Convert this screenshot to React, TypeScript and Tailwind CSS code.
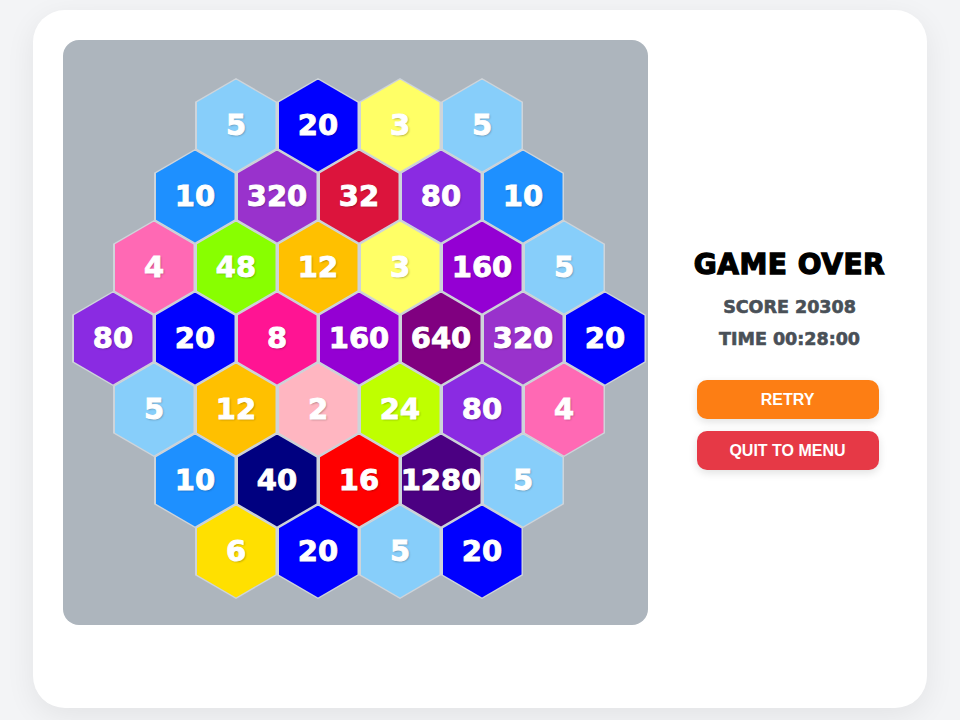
const HEX_CLIP = "[clip-path:polygon(50%_0,100%_25%,100%_75%,50%_100%,0_75%,0_25%)]";

const TILE_COLORS: Record<number, string> = {
  2: "bg-[#ffb6c1]",
  3: "bg-[#ffff66]",
  4: "bg-[#ff69b4]",
  5: "bg-[#87cefa]",
  6: "bg-[#ffe000]",
  8: "bg-[#ff1493]",
  10: "bg-[#1e90ff]",
  12: "bg-[#ffc000]",
  16: "bg-[#ff0000]",
  20: "bg-[#0000ff]",
  24: "bg-[#bfff00]",
  32: "bg-[#dc143c]",
  40: "bg-[#000080]",
  48: "bg-[#88ff00]",
  80: "bg-[#8a2be2]",
  160: "bg-[#9400d3]",
  320: "bg-[#9932cc]",
  640: "bg-[#800080]",
  1280: "bg-[#4b0082]",
};

const board: number[][] = [
  [5, 20, 3, 5],
  [10, 320, 32, 80, 10],
  [4, 48, 12, 3, 160, 5],
  [80, 20, 8, 160, 640, 320, 20],
  [5, 12, 2, 24, 80, 4],
  [10, 40, 16, 1280, 5],
  [6, 20, 5, 20],
];

function Tile({ value }: { value: number }) {
  return (
    <div className={`flex h-[95px] w-[82px] shrink-0 items-center justify-center bg-[#ced4da] ${HEX_CLIP}`}>
      <div
        className={`flex h-[92px] w-[79px] items-center justify-center ${HEX_CLIP} ${TILE_COLORS[value]}`}
      >
        <span className="font-['DejaVu_Sans',sans-serif] text-[29px] font-bold leading-none text-white [-webkit-text-stroke:0.9px_white] [text-shadow:1px_1px_2px_rgba(0,0,0,0.3)]">
          {value}
        </span>
      </div>
    </div>
  );
}

export default function App() {
  return (
    <main className="flex min-h-screen justify-center bg-[#f3f4f6] pt-[10px]">
      <div className="flex h-[698px] w-[894px] rounded-[32px] bg-white py-[30px] pl-[30px] shadow-[0_8px_30px_rgba(0,0,0,0.07)]">
        <section className="flex h-[585px] w-[585px] shrink-0 flex-col items-center rounded-[16px] bg-[#adb5bd] pl-[7px] pt-[38px]">
          {board.map((row, r) => (
            <div key={r} className={`flex ${r > 0 ? "-mt-[24px]" : ""}`}>
              {row.map((v, i) => (
                <Tile key={i} value={v} />
              ))}
            </div>
          ))}
        </section>

        <section className="flex flex-1 flex-col items-center justify-center pl-[4px]">
          <h1 className="font-['DejaVu_Sans',sans-serif] text-[28px] font-bold leading-[34px] tracking-[0.5px] text-black [-webkit-text-stroke:1.3px_black]">
            GAME OVER
          </h1>
          <p className="mt-[13px] font-['DejaVu_Sans',sans-serif] text-[17.5px] font-bold leading-[24px] text-[#495057] [-webkit-text-stroke:0.6px_#495057]">
            SCORE 20308
          </p>
          <p className="mt-[8px] font-['DejaVu_Sans',sans-serif] text-[17.5px] font-bold leading-[24px] text-[#495057] [-webkit-text-stroke:0.6px_#495057]">
            TIME 00:28:00
          </p>
          <button className="-ml-[4px] mt-[29px] h-[39px] w-[182px] rounded-[10px] bg-[#fd7e14] font-['Liberation_Sans',Arial,sans-serif] text-[16px] font-bold text-white shadow-[0_3px_8px_rgba(0,0,0,0.12)]">
            RETRY
          </button>
          <button className="-ml-[4px] mt-[12px] h-[39px] w-[182px] rounded-[10px] bg-[#e63946] font-['Liberation_Sans',Arial,sans-serif] text-[16px] font-bold text-white shadow-[0_3px_8px_rgba(0,0,0,0.12)]">
            QUIT TO MENU
          </button>
        </section>
      </div>
    </main>
  );
}
